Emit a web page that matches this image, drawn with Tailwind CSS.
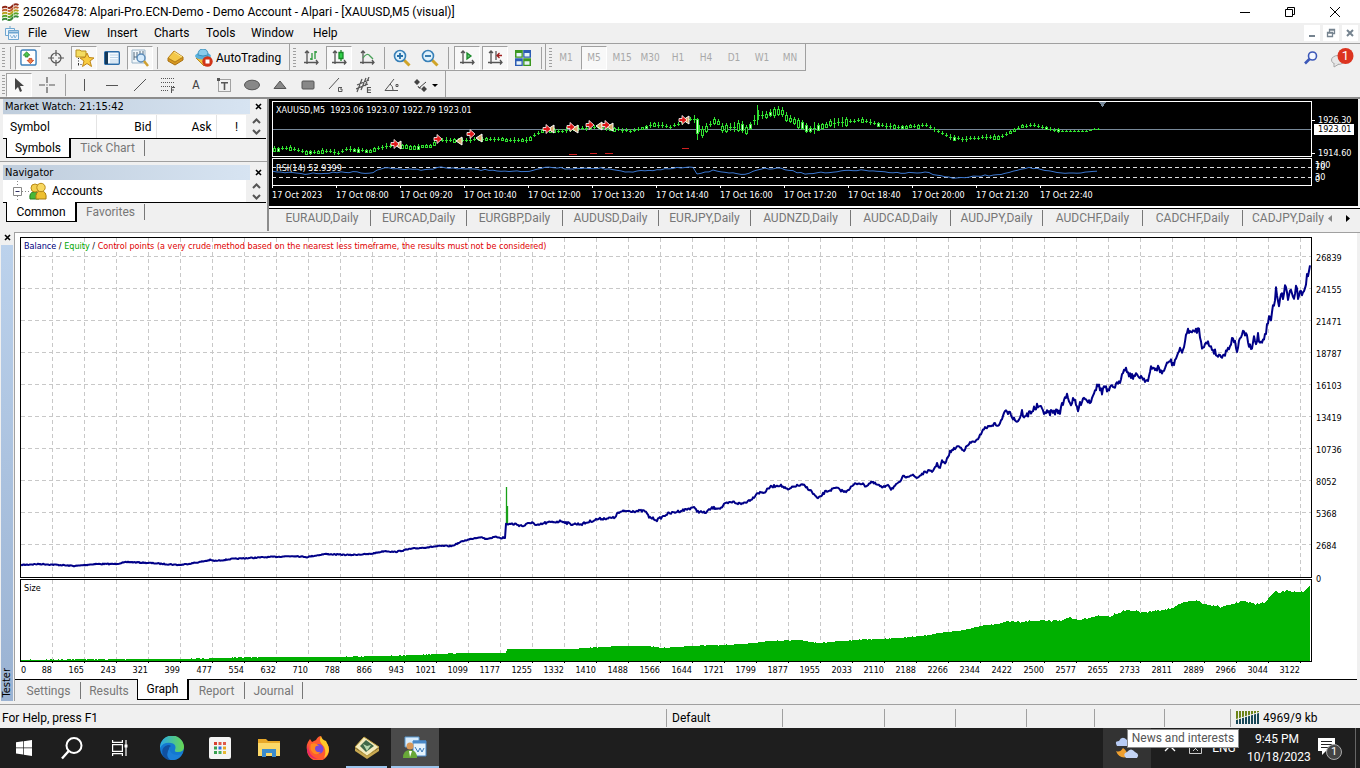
<!DOCTYPE html>
<html lang="en">
<head>
<meta charset="utf-8">
<title>Alpari MetaTrader</title>
<script src="https://cdn.jsdelivr.net/npm/@tailwindcss/browser@4"></script>
</head>
<body class="flex h-screen flex-col overflow-hidden bg-[#f0f0f0] font-[Roboto,sans-serif] text-xs leading-4 text-black">

<header class="flex h-[23px] shrink-0 items-center bg-white">
  <svg class="ml-[2px] h-[18px] w-[17px]" viewBox="0 0 17 18" fill="none" stroke-width="2"><path d="M0 5q3-2 5.500-.5t5-1.500 6-1" stroke="#902818"/><path d="M0 8q3-2 5.500-.5t5-1.500 6-1" stroke="#c06030"/><path d="M0 11q3-2 5.500-.5t5-1.500 6-1" stroke="#b8a020"/><path d="M0 14q3-2 5.500-.5t5-1.500 6-1" stroke="#5aa428"/><path d="M0 17q3-2 5.500-.5t5-1.500 6-1" stroke="#388838"/><path d="M5.500 2v15M11.500 1v15" stroke="#fff" stroke-width=".5"/></svg>
  <h1 class="ml-1 flex-1 whitespace-nowrap">250268478: Alpari-Pro.ECN-Demo - Demo Account - Alpari - [XAUUSD,M5 (visual)]</h1>
  <div class="flex text-black">
    <button class="grid h-[22px] w-[45px] place-items-center" aria-label="Minimize"><svg class="size-3" viewBox="0 0 12 12" stroke="currentColor"><path d="M1 6.500h10"/></svg></button>
    <button class="grid h-[22px] w-[45px] place-items-center" aria-label="Restore"><svg class="size-3" viewBox="0 0 12 12" fill="none" stroke="currentColor"><path d="M1.500 3.500h7v7h-7zM3.500 3V1.500h7v7H9"/></svg></button>
    <button class="mr-[2px] grid h-[22px] w-[46px] place-items-center" aria-label="Close"><svg class="size-3" viewBox="0 0 12 12" stroke="currentColor"><path d="M1 1l10 10M11 1L1 11"/></svg></button>
  </div>
</header>

<nav class="flex h-[21px] shrink-0 items-center border-b border-[#a0a0a0]" aria-label="Menu">
  <svg class="mx-[5px] size-[14px]" viewBox="0 0 14 14" fill="#eef6fc" stroke="#6ea6d0"><path d="M.5 2.500h9v7h-9z"/><path d="M3.500 4.500h10v9h-10z"/><path d="M4 6.500h9" stroke-width="2"/><path d="M5 9l2 3 2-3 1 3 2-3" fill="none" stroke-width=".8"/><path d="M5 0v2"/></svg>
  <button class="w-9 text-left ml-1">File</button><button class="w-[43px] text-left">View</button><button class="w-[47px] text-left">Insert</button><button class="w-[52px] text-left">Charts</button><button class="w-[45px] text-left">Tools</button><button class="w-[62px] text-left">Window</button><button class="text-left">Help</button>
  <div class="ml-auto flex gap-[3px] pr-[2px] text-[#75838f]">
    <button class="grid size-4 place-items-center bg-white" aria-label="Minimize chart"><svg class="size-[10px]" viewBox="0 0 10 10" stroke="currentColor" stroke-width="2"><path d="M2 8h6"/></svg></button>
    <button class="grid size-4 place-items-center bg-white" aria-label="Restore chart"><svg class="size-[10px]" viewBox="0 0 10 10" fill="none" stroke="currentColor" stroke-width="1.300"><path d="M1.500 4.500h5v4h-5zM1 5h6M3.500 4V1.500h5v4H7M3 2h6"/></svg></button>
    <button class="grid size-4 place-items-center bg-white" aria-label="Close chart"><svg class="size-[10px]" viewBox="0 0 10 10" stroke="currentColor" stroke-width="2"><path d="M2 2l6 6M8 2L2 8"/></svg></button>
  </div>
</nav>

<div class="flex h-[27px] shrink-0 items-stretch" role="toolbar" aria-label="Standard">
  <div class="flex items-center border-r border-b border-[#a0a0a0] pl-[2px] pr-1 pt-px">
    <i class="h-5 w-[3px] bg-[repeating-linear-gradient(#a0a0a0_0_1px,transparent_1px_3px)]"></i>
    <i class="ml-[5px] mr-[3px] h-[22px] w-px bg-[#a0a0a0]"></i>
    <button class="mx-px grid h-6 w-[26px] place-items-center border border-white border-t-[#a0a0a0] border-l-[#a0a0a0] bg-[#f8f8f8]" aria-label="Market Watch"><svg class="size-[17px]" viewBox="0 0 18 18"><rect x="1" y="1" width="16" height="16" rx="2" fill="#fff" stroke="#3c80bc" stroke-width="1.500"/><path d="M7 3l3.500 3.500H8.500v2h-3v-2H3.500z" fill="#50c850" stroke="#208020" stroke-width=".8"/><path d="M11 15.500L7.500 12h2v-2h3v2h2z" fill="#f08048" stroke="#c03818" stroke-width=".8"/></svg></button>
    <button class="grid h-6 w-7 place-items-center" aria-label="Data Window"><svg class="size-4" viewBox="0 0 16 16" fill="none" stroke="#555" stroke-width="1.200"><circle cx="8" cy="8" r="5"/><path d="M8 0v6M8 10v6M0 8h6M10 8h6"/></svg></button>
    <button class="mx-px grid h-6 w-[26px] place-items-center border border-white border-t-[#a0a0a0] border-l-[#a0a0a0] bg-[#f8f8f8]" aria-label="Navigator"><svg class="size-[19px]" viewBox="0 0 19 19"><path d="M1 2h4l1 1h5v6H1z" fill="#f4dc60" stroke="#b89020"/><path d="M3.500 10v8M3 16.500h6" stroke="#333" stroke-dasharray="1 1.500"/><path d="M12 5l2 4.500 5 .5-4 3 1.500 5.500-4.500-3-4.500 3L9 13l-4-3 5-.5z" fill="#f8cc40" stroke="#c08818"/></svg></button>
    <button class="grid h-6 w-7 place-items-center" aria-label="Terminal"><svg class="h-[14px] w-4" viewBox="0 0 16 14"><rect x=".7" y=".7" width="14.600" height="12.600" rx="1" fill="#f4faff" stroke="#2c6ca8" stroke-width="1.400"/><path d="M2.500 1v12" stroke="#143858" stroke-width="3"/><path d="M6 4h8M6 6.500h8M6 9h8M6 11h8" stroke="#bcd4e8"/></svg></button>
    <button class="mx-px grid h-6 w-[26px] place-items-center border border-white border-t-[#a0a0a0] border-l-[#a0a0a0] bg-[#f8f8f8]" aria-label="Strategy Tester"><svg class="size-[18px]" viewBox="0 0 18 18" fill="none"><path d="M1 1h13v13H1z" fill="#f0f6fa" stroke="#9ab4c8"/><path d="M3 3v8M3 8h3M6 3v6M9 2v4M12 2v4" stroke="#50687c"/><circle cx="10" cy="9" r="4" fill="#d4eafc" stroke="#5c8cb8" stroke-width="1.500"/><path d="M13 12l4 5" stroke="#d0a030" stroke-width="2.500"/></svg></button>
    <i class="mx-[3px] h-[22px] w-px bg-[#a0a0a0]"></i>
    <button class="grid h-6 w-7 place-items-center" aria-label="New Order"><svg class="h-4 w-[17px]" viewBox="0 0 17 16"><path d="M1 8l7 4 8-5v3l-8 5-7-4z" fill="#d89820" stroke="#a87010"/><path d="M1 8l6-7 9 6-8 5z" fill="#f4c848" stroke="#b88018"/><path d="M7 2l8 5" stroke="#fce898"/></svg></button>
    <button class="flex h-6 w-24 items-center gap-[3px] pl-[6px]"><svg class="size-[18px] shrink-0" viewBox="0 0 18 18"><path d="M1 9l8 8 6-6V8z" fill="#f0c040" stroke="#b88820"/><ellipse cx="8" cy="7" rx="8" ry="3.500" fill="#58b0dc"/><path d="M3 6q0-6 5-6t5 6q-5 2-10 0" fill="#88ccec" stroke="#3c90bc"/><circle cx="12.500" cy="12.500" r="5.200" fill="#d03418"/><rect x="10.500" y="10.500" width="4" height="4" fill="#fff"/></svg><span>AutoTrading</span></button>
  </div>
  <div class="flex items-center border-r border-b border-[#a0a0a0] pl-[3px] pr-[3px] pt-px">
    <i class="mr-px h-5 w-[3px] bg-[repeating-linear-gradient(#a0a0a0_0_1px,transparent_1px_3px)]"></i>
    <button class="grid h-6 w-7 place-items-center" aria-label="Bar chart"><svg class="size-[15px]" viewBox="0 0 15 15" fill="none" stroke="#555" stroke-width="1.300"><path d="M3 1v13M1 3l2-2 2 2M0 12.500h14M12 10l2 2.500-2 2"/><path d="M8 3v7M6 9h2M11 1v8M11 2h2" stroke="#289838"/></svg></button>
    <button class="mx-px grid h-6 w-[26px] place-items-center border border-white border-t-[#a0a0a0] border-l-[#a0a0a0] bg-[#f8f8f8]" aria-label="Candlesticks"><svg class="size-[15px]" viewBox="0 0 15 15" fill="none" stroke="#555" stroke-width="1.300"><path d="M3 1v13M1 3l2-2 2 2M0 12.500h14M12 10l2 2.500-2 2"/><path d="M9 0v11" stroke="#188828"/><path d="M7 2.500h4v6H7z" fill="#30d048" stroke="#188828"/></svg></button>
    <button class="grid h-6 w-7 place-items-center" aria-label="Line chart"><svg class="size-[15px]" viewBox="0 0 15 15" fill="none" stroke="#555" stroke-width="1.300"><path d="M3 1v13M1 3l2-2 2 2M0 12.500h14M12 10l2 2.500-2 2"/><path d="M3 8q4-6 7-2l3 3" stroke="#48a058"/></svg></button>
    <i class="mx-[3px] h-[22px] w-px bg-[#a0a0a0]"></i>
    <button class="grid h-6 w-7 place-items-center" aria-label="Zoom in"><svg class="size-[18px]" viewBox="0 0 18 18" fill="none"><path d="M11 11l5.500 5.500" stroke="#d0a428" stroke-width="3"/><circle cx="7" cy="7" r="5.500" fill="#e0f2fc" stroke="#3880b8" stroke-width="1.600"/><path d="M4 7h6M7 4v6" stroke="#2870a8" stroke-width="1.800"/></svg></button>
    <button class="grid h-6 w-7 place-items-center" aria-label="Zoom out"><svg class="size-[18px]" viewBox="0 0 18 18" fill="none"><path d="M11 11l5.500 5.500" stroke="#d0a428" stroke-width="3"/><circle cx="7" cy="7" r="5.500" fill="#e0f2fc" stroke="#3880b8" stroke-width="1.600"/><path d="M4 7h6" stroke="#2870a8" stroke-width="1.800"/></svg></button>
    <i class="mx-1 h-[22px] w-px bg-[#a0a0a0]"></i>
    <button class="mx-px grid h-6 w-[26px] place-items-center border border-white border-t-[#a0a0a0] border-l-[#a0a0a0] bg-[#f8f8f8]" aria-label="Auto scroll"><svg class="size-[15px]" viewBox="0 0 15 15" fill="none" stroke="#555" stroke-width="1.300"><path d="M3 1v13M1 3l2-2 2 2M0 12.500h14M12 10l2 2.500-2 2"/><path d="M7 3l4 3-4 3z" fill="#60c870" stroke="#188828"/></svg></button>
    <button class="mx-px grid h-6 w-[26px] place-items-center border border-white border-t-[#a0a0a0] border-l-[#a0a0a0] bg-[#f8f8f8]" aria-label="Chart shift"><svg class="size-[15px]" viewBox="0 0 15 15" fill="none" stroke="#555" stroke-width="1.300"><path d="M3 1v13M1 3l2-2 2 2M0 12.500h14M12 10l2 2.500-2 2M8 1v9"/><path d="M9 5.500h5M11.500 3L9 5.500 11.500 8" stroke="#a02020"/></svg></button>
    <button class="grid h-6 w-7 place-items-center" aria-label="Tile windows"><svg class="size-4" viewBox="0 0 16 16"><path d="M0 0h7.800v7.800H0zM8.200 8.200H16V16H8.200z" fill="#3c9820"/><path d="M8.200 0H16v7.800H8.200zM0 8.200h7.800V16H0z" fill="#2c5cb4"/><path d="M1.500 3h5v3.500h-5zM9.500 3h5v3.500h-5zM1.500 11.300h5v3.500h-5zM9.500 11.300h5v3.500h-5z" fill="#e8f4f8"/></svg></button>
    <i class="ml-1 h-[22px] w-px bg-[#a0a0a0]"></i>
  </div>
  <div class="flex items-center border-r border-b border-[#a0a0a0] pl-[3px] pr-px pt-px font-['DejaVu_Sans_Condensed','DejaVu_Sans',sans-serif] text-[10px] text-[#a8a8a8]">
    <i class="h-5 w-[3px] bg-[repeating-linear-gradient(#a0a0a0_0_1px,transparent_1px_3px)]"></i>
    <button class="h-6 w-7">M1</button><button class="mx-px h-6 w-[26px] border border-white border-t-[#a0a0a0] border-l-[#a0a0a0] bg-[#f8f8f8]">M5</button><button class="h-6 w-7">M15</button><button class="h-6 w-7">M30</button><button class="h-6 w-7">H1</button><button class="h-6 w-7">H4</button><button class="h-6 w-7">D1</button><button class="h-6 w-7">W1</button><button class="h-6 w-7">MN</button>
  </div>
  <div class="ml-auto flex items-center gap-3 pr-[6px]">
    <button aria-label="Search"><svg class="size-[14px]" viewBox="0 0 14 14" fill="none" stroke="#3c58b8"><circle cx="8.500" cy="5" r="4" fill="#f4f8ff" stroke-width="1.600"/><path d="M5.500 8L1 12.500" stroke-width="2.600"/></svg></button>
    <button class="relative h-6 w-6" aria-label="1 notification"><svg class="size-6" viewBox="0 0 24 24"><ellipse cx="8" cy="14" rx="6.500" ry="4.500" fill="#e8e8e8" stroke="#a8a8a8"/><path d="M4 17v4l5-3" fill="#e8e8e8" stroke="#a8a8a8"/><circle cx="15.500" cy="10" r="8" fill="#dc3420"/></svg><span class="absolute left-0 top-[2px] w-[31px] text-center text-[13px] text-white">1</span></button>
  </div>
</div>

<div class="flex h-7 shrink-0 border-b-2 border-[#8c8c8c]" role="toolbar" aria-label="Line studies">
  <div class="flex items-center border-r border-[#a0a0a0] pl-[2px] pr-[2px] pt-[2px]">
    <i class="h-5 w-[3px] bg-[repeating-linear-gradient(#a0a0a0_0_1px,transparent_1px_3px)]"></i>
    <button class="mx-px grid h-6 w-[26px] place-items-center border border-white border-t-[#a0a0a0] border-l-[#a0a0a0] bg-[#f8f8f8]" aria-label="Cursor"><svg class="h-[15px] w-[10px]" viewBox="0 0 10 15" fill="#444"><path d="M1 0v12l3-3 2 5 2-1-2-5h4z"/></svg></button>
    <button class="grid h-6 w-7 place-items-center" aria-label="Crosshair"><svg class="size-4" viewBox="0 0 16 16" stroke="#555" stroke-width="1.200"><path d="M8 0v6M8 10v6M0 8h6M10 8h6M8 7.500v1"/></svg></button>
    <i class="mx-1 h-[22px] w-px bg-[#a0a0a0]"></i>
    <button class="grid h-6 w-7 place-items-center" aria-label="Vertical line"><svg class="size-[14px]" viewBox="0 0 14 14" stroke="#555"><path d="M7.500 1v12"/></svg></button>
    <button class="grid h-6 w-7 place-items-center" aria-label="Horizontal line"><svg class="size-[14px]" viewBox="0 0 14 14" stroke="#555"><path d="M1 7.500h12"/></svg></button>
    <button class="grid h-6 w-7 place-items-center" aria-label="Trendline"><svg class="size-[14px]" viewBox="0 0 14 14" stroke="#555"><path d="M1 13L13 1"/></svg></button>
    <button class="grid h-6 w-7 place-items-center" aria-label="Fibonacci"><svg class="size-4" viewBox="0 0 16 16" fill="none" stroke="#555"><path d="M1 1.500h14M1 5.500h14M1 9.500h14M1 13.500h8" stroke-dasharray="1 1"/><path d="M11.500 16V10.500H15M11 13h3"/></svg></button>
    <button class="h-6 w-7 font-['DejaVu_Sans_Condensed',sans-serif] text-xs text-[#444]" aria-label="Text">A</button>
    <button class="grid h-6 w-7 place-items-center" aria-label="Text label"><svg class="size-[14px]" viewBox="0 0 14 14" fill="none" stroke="#555"><path d="M1.500 1.500h12v12h-12z" stroke-dasharray="1 1"/><path d="M0 0h3v3H0z" fill="#555" stroke="none"/><path d="M4 4.700h7M7.500 4v8" stroke-width="1.600"/></svg></button>
    <button class="grid h-6 w-7 place-items-center" aria-label="Ellipse"><svg class="h-3 w-4" viewBox="0 0 16 12" fill="#888" stroke="#555"><ellipse cx="8" cy="6" rx="7.500" ry="4.800"/></svg></button>
    <button class="grid h-6 w-7 place-items-center" aria-label="Triangle"><svg class="h-3 w-[14px]" viewBox="0 0 14 12" fill="#888" stroke="#555"><path d="M7 2l6 7.500H1z"/></svg></button>
    <button class="grid h-6 w-7 place-items-center" aria-label="Rectangle"><svg class="h-3 w-[14px]" viewBox="0 0 14 12" fill="#888" stroke="#555"><rect x="1" y="2" width="12" height="8" rx="1"/></svg></button>
    <button class="grid h-6 w-7 place-items-center" aria-label="Gann line"><svg class="size-4" viewBox="0 0 16 16" fill="none" stroke="#555"><path d="M1 12L11 1M14 10.500h-3.500v4H14V12h-2"/></svg></button>
    <button class="grid h-6 w-7 place-items-center" aria-label="Channel"><svg class="size-4" viewBox="0 0 16 16" fill="none" stroke="#555" stroke-width="1.200"><path d="M1 15L6 2M5 13l5-12M9 9l4-9M1 8l12-5M0 12l12-5M15 10.500h-3.500v5H15M12 13h3"/></svg></button>
    <button class="grid h-6 w-7 place-items-center" aria-label="Angle"><svg class="size-4" viewBox="0 0 16 16" fill="none" stroke="#555"><path d="M10 2L1 13.500h13M6 7q3 2 3 6M12 7.500h2v2h-2z"/></svg></button>
    <button class="flex h-6 w-[37px] items-center gap-1 pl-2" aria-label="Arrows"><svg class="size-[14px] shrink-0" viewBox="0 0 14 14" fill="#444"><path d="M3 1l3 3-3 3-3-3zM10 8l3 3-3 3-3-3z"/><path d="M5 10L12 4M4 8l1 2 2 0" stroke="#444" fill="none"/></svg><svg class="h-[3px] w-[6px] shrink-0" viewBox="0 0 6 3"><path d="M0 0h6L3 3z"/></svg></button>
  </div>
</div>

<main class="flex min-h-0 flex-1 flex-col">
  <div class="flex h-[132px] shrink-0">
    <aside class="flex w-[269px] shrink-0 flex-col border-r-2 border-[#8c8c8c]">
      <section class="h-[63px] border-b border-[#a0a0a0] pl-[3px] pr-px">
        <div class="flex h-[15px] items-center"><h2 class="flex-1 bg-linear-to-r from-[#bfcddc] to-[#d7e4f2] pl-[2px] font-['DejaVu_Sans_Condensed','DejaVu_Sans',sans-serif] text-[11px] leading-[15px]">Market Watch: 21:15:42</h2><button class="w-4" aria-label="Close"><svg class="mx-auto size-[7px]" viewBox="0 0 7 7" stroke="#000" stroke-width="1.600"><path d="M1 1l5 5M6 1L1 6"/></svg></button></div>
        <div class="mt-px flex h-6 border-b border-black bg-white">
          <table class="flex-1 table-fixed"><tr class="text-right"><th class="w-[93px] border-r border-[#e4e4e4] pl-[7px] text-left font-normal" scope="col">Symbol</th><th class="w-[60px] border-r border-[#e4e4e4] pr-1 font-normal" scope="col">Bid</th><th class="w-[60px] border-r border-[#e4e4e4] pr-1 font-normal" scope="col">Ask</th><th class="pr-2 font-normal" scope="col">!</th></tr></table>
          <div class="flex w-5 flex-col items-center justify-around bg-[#f0f0f0]"><svg class="h-[6px] w-[9px]" viewBox="0 0 9 6" fill="none" stroke="#555" stroke-width="2"><path d="M1 5L4.500 1.500 8 5"/></svg><svg class="h-[6px] w-[9px]" viewBox="0 0 9 6" fill="none" stroke="#555" stroke-width="2"><path d="M1 1L4.500 4.500 8 1"/></svg></div>
        </div>
        <div class="-mt-px flex h-5 pl-[3px] text-[#777]"><button class="w-[65px] border border-t-0 border-r-2 border-black bg-white text-black">Symbols</button><button class="my-[2px] w-[74px] border-r border-[#777]">Tick Chart</button></div>
      </section>
      <section class="h-[66px] pl-[3px] pr-px pt-[3px]">
        <div class="flex h-[15px] items-center"><h2 class="flex-1 bg-linear-to-r from-[#bfcddc] to-[#d7e4f2] pl-[2px] font-['DejaVu_Sans_Condensed','DejaVu_Sans',sans-serif] text-[11px] leading-[15px]">Navigator</h2><button class="w-4" aria-label="Close"><svg class="mx-auto size-[7px]" viewBox="0 0 7 7" stroke="#000" stroke-width="1.600"><path d="M1 1l5 5M6 1L1 6"/></svg></button></div>
        <div class="flex h-[23px] border-b border-black bg-white">
          <div class="flex flex-1 items-center pl-[10px]"><svg class="h-5 w-4" viewBox="0 0 16 20" fill="none" stroke="#888"><path d="M4.500 0v20M9 10.500h7" stroke-dasharray="1 2"/><path d="M.5 6.500h8v8h-8z" fill="#fff"/><path d="M2.500 10.500h4" stroke="#336"/></svg><svg class="size-[18px]" viewBox="0 0 18 18"><path d="M1 17q-1-7 4-7 6 0 5 7z" fill="#48b838" stroke="#288020"/><circle cx="6" cy="6" r="4" fill="#f4d050" stroke="#b88a18"/><path d="M7 17q-1-8 5-8 6 0 5 8z" fill="#eec030" stroke="#a87c10"/><circle cx="12" cy="5.500" r="4.200" fill="#f8d860" stroke="#b88a18"/></svg><span class="ml-[5px]">Accounts</span></div>
          <div class="flex w-5 flex-col items-center justify-around bg-[#f0f0f0]"><svg class="h-[6px] w-[9px]" viewBox="0 0 9 6" fill="none" stroke="#555" stroke-width="2"><path d="M1 5L4.500 1.500 8 5"/></svg><svg class="h-[6px] w-[9px]" viewBox="0 0 9 6" fill="none" stroke="#555" stroke-width="2"><path d="M1 1L4.500 4.500 8 1"/></svg></div>
        </div>
        <div class="-mt-px flex h-5 pl-[3px] text-[#777]"><button class="w-[71px] border border-t-0 border-r-2 border-black bg-white text-black">Common</button><button class="my-[2px] w-[68px] border-r border-[#777]">Favorites</button></div>
      </section>
    </aside>

    <section class="flex min-w-0 flex-1 flex-col" aria-label="XAUUSD chart">
      <div class="mr-[2px] flex h-[107px] bg-black pl-[3px] pt-[2px] font-['DejaVu_Sans_Condensed','DejaVu_Sans',sans-serif] text-[9px] text-white">
        <div class="min-w-0 flex-1">
          <div class="relative">
            <svg class="block h-[87px] w-full" viewBox="272 101 1040 87" preserveAspectRatio="none" shape-rendering="crispEdges">
              <path d="M272 129.500H1312" stroke="#778899"/>
              <path d="M272 167.500H1312M272 177.500H1312" stroke="#ddd" stroke-dasharray="4 3"/>
              <polyline id="rsi" fill="none" stroke="#3c78d0" shape-rendering="auto"/>
              <g id="candles" stroke="#30e030"></g>
              <g id="deals" shape-rendering="auto"></g>
              <path d="M569 154.500h8M590 153.500h7M605 153.500h8M682 148.500h7" stroke="#d02020"/>
              <path d="M1098 101h9l-4.500 6z" fill="#778899"/>
              <path d="M272.500 101.500h1039v55h-1039zM272.500 158.500h1039v27h-1039z" fill="none" stroke="#fff"/>
              <path d="M272.500 185v3M336.500 185v3M400.500 185v3M464.500 185v3M528.500 185v3M592.500 185v3M656.500 185v3M720.500 185v3M784.500 185v3M848.500 185v3M912.500 185v3M976.500 185v3M1040.500 185v3" stroke="#fff"/>
            </svg>
            <p class="absolute left-1 top-px whitespace-pre">XAUUSD,M5  1923.06 1923.07 1922.79 1923.01</p>
            <p class="absolute left-1 top-[59px]">RSI(14) 52.9399</p>
          </div>
          <div class="grid grid-cols-[repeat(16,4fr)_1fr] whitespace-nowrap leading-[14px]"><span>17 Oct 2023</span><span>17 Oct 08:00</span><span>17 Oct 09:20</span><span>17 Oct 10:40</span><span>17 Oct 12:00</span><span>17 Oct 13:20</span><span>17 Oct 14:40</span><span>17 Oct 16:00</span><span>17 Oct 17:20</span><span>17 Oct 18:40</span><span>17 Oct 20:00</span><span>17 Oct 21:20</span><span>17 Oct 22:40</span></div>
        </div>
        <div class="relative w-[46px] leading-[11px]">
          <i class="absolute left-0 top-[19px] h-px w-[3px] bg-white"></i><i class="absolute left-0 top-[52px] h-px w-[3px] bg-white"></i>
          <span class="absolute left-[6px] top-[14px]">1926.30</span>
          <span class="absolute left-[6px] top-[47px]">1914.60</span>
          <span class="absolute left-[2px] top-[23px] bg-white pr-[3px] pl-[4px] text-black">1923.01</span>
          <span class="absolute left-[3px] top-[59px]">100</span><span class="absolute left-[3px] top-[61px]">70</span>
          <span class="absolute left-[3px] top-[71px]">30</span><span class="absolute left-[3px] top-[73px]">0</span>
        </div>
      </div>
      <div class="h-[3px] border-t border-b border-t-white border-b-black bg-white"></div>
      <div class="flex h-[18px] items-center text-[#777]">
        <div class="flex min-w-0 flex-1 whitespace-nowrap pl-[5px] leading-4">
          <button class="w-[97px] shrink-0 border-r border-[#777]">EURAUD,Daily</button><button class="w-24 shrink-0 border-r border-[#777]">EURCAD,Daily</button><button class="w-24 shrink-0 border-r border-[#777]">EURGBP,Daily</button><button class="w-24 shrink-0 border-r border-[#777]">AUDUSD,Daily</button><button class="w-[92px] shrink-0 border-r border-[#777]">EURJPY,Daily</button><button class="w-[100px] shrink-0 border-r border-[#777]">AUDNZD,Daily</button><button class="w-[100px] shrink-0 border-r border-[#777]">AUDCAD,Daily</button><button class="w-[92px] shrink-0 border-r border-[#777]">AUDJPY,Daily</button><button class="w-[100px] shrink-0 border-r border-[#777]">AUDCHF,Daily</button><button class="w-[100px] shrink-0 border-r border-[#777]">CADCHF,Daily</button><button class="w-[84px] shrink-0 pl-[6px]">CADJPY,Daily</button>
        </div>
        <button class="w-3" aria-label="Scroll left"><svg class="h-[7px] w-1" viewBox="0 0 4 7" fill="#888"><path d="M4 0v7L0 3.500z"/></svg></button>
        <button class="mr-1 w-4" aria-label="Scroll right"><svg class="mx-auto h-[7px] w-1" viewBox="0 0 4 7"><path d="M0 0v7l4-3.500z"/></svg></button>
      </div>
    </section>
  </div>

  <section class="mt-px flex min-h-0 flex-1 border-b border-[#a0a0a0] pb-[3px]" aria-label="Tester">
    <div class="flex w-[15px] flex-col border-r border-[#a0a0a0]">
      <button class="grid h-[11px] place-items-center" aria-label="Close tester"><svg class="size-[7px]" viewBox="0 0 7 7" stroke="#000" stroke-width="1.600"><path d="M1 1l5 5M6 1L1 6"/></svg></button>
      <div class="mt-[2px] mr-px ml-px flex flex-1 items-center bg-linear-to-b from-[#bcd2ec] to-[#9ab2d2] pb-1 font-['DejaVu_Sans_Condensed','DejaVu_Sans',sans-serif] text-[11px] leading-3"><h2 class="mt-auto rotate-180 [writing-mode:vertical-rl]">Tester</h2></div>
    </div>
    <div class="flex min-w-0 flex-1 flex-col border-t border-[#a0a0a0]">
      <div class="mr-[3px] flex min-h-0 flex-1 bg-white pb-[2px] pl-[5px] pt-1 font-['DejaVu_Sans_Condensed','DejaVu_Sans',sans-serif] text-[9px]">
        <div class="flex min-w-0 flex-1 flex-col">
          <div class="relative min-h-0 flex-1">
            <svg class="absolute inset-0 size-full" viewBox="20 237 1292 341" preserveAspectRatio="none">
              <g id="grid" stroke="#c8c8c8" stroke-dasharray="4 3" shape-rendering="crispEdges"></g>
              <path d="M506.500 525V487M507.500 525V506" stroke="#18a018" stroke-width="1.300"/>
              <polyline id="balance" fill="none" stroke="#000088" stroke-width="2" stroke-linejoin="round"/>
              <path d="M20.500 237.500h1291v340h-1291z" fill="none" stroke="#000" shape-rendering="crispEdges"/>
            </svg>
            <p class="absolute left-1 top-px text-black"><span class="text-[#000080]">Balance</span> / <span class="text-[#00a800]">Equity</span> / <span class="text-[#e00000]">Control points (a very crude method based on the nearest less timeframe, the results must not be considered)</span></p>
          </div>
          <div class="relative mt-px">
            <svg class="block h-[84px] w-full" viewBox="20 579 1292 84" preserveAspectRatio="none" shape-rendering="crispEdges">
              <g id="gridSize" stroke="#c8c8c8" stroke-dasharray="4 3"></g>
              <polygon id="size" fill="#00b000"/>
              <path d="M20.500 579.500h1291v82h-1291z" fill="none" stroke="#000"/>
              <g id="ticks" stroke="#000"></g>
            </svg>
            <p class="absolute left-1 top-px">Size</p>
          </div>
          <div class="grid grid-cols-[repeat(40,8fr)_3fr] text-right leading-[14px]"><span class="flex justify-between pl-px"><span>0</span><span>88</span></span><span>165</span><span>243</span><span>321</span><span>399</span><span>477</span><span>554</span><span>632</span><span>710</span><span>788</span><span>866</span><span>943</span><span>1021</span><span>1099</span><span>1177</span><span>1255</span><span>1332</span><span>1410</span><span>1488</span><span>1566</span><span>1644</span><span>1721</span><span>1799</span><span>1877</span><span>1955</span><span>2033</span><span>2110</span><span>2188</span><span>2266</span><span>2344</span><span>2422</span><span>2500</span><span>2577</span><span>2655</span><span>2733</span><span>2811</span><span>2889</span><span>2966</span><span>3044</span><span>3122</span></div>
        </div>
        <div class="mb-[98px] grid w-[45px] grid-rows-[4fr_repeat(10,32fr)_17fr] items-center pl-1 pt-px"><i></i><span>26839</span><span>24155</span><span>21471</span><span>18787</span><span>16103</span><span>13419</span><span>10736</span><span>8052</span><span>5368</span><span>2684</span><span class="-mb-2 self-end">0</span></div>
      </div>
      <div class="mr-[3px] flex h-[22px] border-t border-black bg-[#f0f0f0] text-[#777]">
        <button class="my-[2px] w-[66px] border-r border-[#777] pl-[2px]">Settings</button><button class="my-[2px] w-[56px]">Results</button><button class="-mt-px h-[21px] w-[52px] border border-t-0 border-r-2 border-black bg-white text-black">Graph</button><button class="my-[2px] w-[56px] border-r border-[#777]">Report</button><button class="my-[2px] w-[58px] border-r border-[#777]">Journal</button>
      </div>
    </div>
  </section>
</main>

<div class="flex h-[23px] shrink-0 items-center pt-[2px]" role="status">
  <span class="flex-1 pl-[2px]">For Help, press F1</span>
  <span class="h-[18px] w-[116px] border-l border-[#a0a0a0] pl-[5px] leading-[18px]">Default</span><span class="h-[18px] w-[102px] border-l border-[#a0a0a0]"></span><span class="h-[18px] w-[71px] border-l border-[#a0a0a0]"></span><span class="h-[18px] w-[71px] border-l border-[#a0a0a0]"></span><span class="h-[18px] w-[68px] border-l border-[#a0a0a0]"></span><span class="h-[18px] w-[70px] border-l border-[#a0a0a0]"></span><span class="h-[18px] w-[66px] border-l border-[#a0a0a0]"></span>
  <span class="flex h-[18px] w-[130px] items-center gap-1 border-l border-[#a0a0a0] pl-[5px]"><svg class="h-[13px] w-[23px]" viewBox="0 0 23 13"><path d="M1 0v13M4 0v13M7 0v13M10 0v13M13 0v13M16 0v13M19 0v13M22 0v13" stroke="#6c8418" stroke-width="2"/><path d="M1 9v4M4 8v5M7 7v6M10 6v7M13 5v8M16 4v9M19 3v10M22 2v11" stroke="#184858" stroke-width="2"/><path d="M0 8.500L23 1.500" stroke="#f0f0f0"/></svg>4969/9 kb</span>
</div>

<footer class="flex h-10 shrink-0 bg-[#1e1e1e] text-white">
  <button class="grid w-12 place-items-center" aria-label="Start"><svg class="size-4" viewBox="0 0 16 16" fill="#fff"><path d="M0 2.300l7-1v6.300H0zM7.700 1.200L16 0v7.600H7.700zM0 8.300h7v6.300l-7-1zM7.700 8.300H16V16l-8.300-1.200z"/></svg></button>
  <button class="grid w-12 place-items-center" aria-label="Search"><svg class="size-6" viewBox="0 0 24 24" fill="none" stroke="#fff" stroke-width="2"><circle cx="14" cy="9.500" r="7.500"/><path d="M8.700 15L2 22.500" stroke-width="2.400"/></svg></button>
  <button class="grid w-12 place-items-center" aria-label="Task view"><svg class="size-4" viewBox="0 0 16 16" fill="none" stroke="#fff" stroke-width="1.200"><path d="M.6 4.600h9.800v6.800H.6zM.6 0v2.400h9.800V0M.6 16v-2.400h9.800V16M14 0v16"/><path d="M12.500 4.500h3v3h-3z" fill="#fff" stroke="none"/></svg></button>
  <button class="ml-[3px] grid w-[49px] place-items-center" aria-label="Edge"><svg class="size-6" viewBox="0 0 24 24"><defs><linearGradient id="eg" x1="0" x2="1"><stop offset="0" stop-color="#28a8e8"/><stop offset="1" stop-color="#68d850"/></linearGradient></defs><circle cx="12" cy="12" r="12" fill="#1478d0"/><path d="M0 12A12 12 0 0 1 24 11q0 5-6 5-4 0-3-2 2-6-4-7Q3 6 0 12" fill="url(#eg)"/><path d="M9 12q-1 9 9 10-10 5-15-2-3-9 5-11 2 0 3 1-2 1-2 2" fill="#1050a0"/><path d="M9.500 12q0 6 7 7 4 0 6-2-3 8-12 7-6-4-1-12" fill="#1c80d8"/></svg></button>
  <button class="grid w-12 place-items-center" aria-label="Apps"><svg class="size-[22px]" viewBox="0 0 22 22"><rect width="22" height="22" rx="2" fill="#f4f4f4"/><path d="M5 5h3v3H5z" fill="#d84030"/><path d="M9.500 5h3v3h-3zM14 5h3v3h-3z" fill="#e05848"/><path d="M5 9.500h3v3H5z" fill="#38a050"/><path d="M9.500 9.500h3v3h-3z" fill="#3070e0"/><path d="M14 9.500h3v3h-3z" fill="#e8a820"/><path d="M5 14h3v3H5z" fill="#38a050"/><path d="M9.500 14h3v3h-3z" fill="#48b060"/><path d="M14 14h3v3h-3z" fill="#e8b830"/></svg></button>
  <button class="grid w-[49px] place-items-center" aria-label="File Explorer"><svg class="h-5 w-[22px]" viewBox="0 0 22 20"><path d="M0 1h8l2 2h12v6H0z" fill="#e8a828"/><path d="M0 5h22v13H0z" fill="#fcd868"/><path d="M4 11h14v8h-4v-4H8v4H4z" fill="#3c8ccc"/></svg></button>
  <button class="grid w-[49px] place-items-center" aria-label="Firefox"><svg class="size-6" viewBox="0 0 24 24"><path d="M2 6l2-3 2 3 4-2q2-4 5-4l1 4q7 3 7 10a11 11 0 0 1-22 0q-1-4 1-8" fill="#ff5a30"/><path d="M15 0q1 4 5 5 3 5 3 9a11 11 0 0 1-5 8q4-8-3-15-2-3 0-7" fill="#ffc828"/><path d="M2 8q0 12 10 15-9 0-11-8" fill="#e82868"/><circle cx="12.500" cy="13" r="5" fill="#7848d8"/><path d="M5 8q5-2 8 2-4-1-4 3 1 4 6 3-4 4-8 1-4-4-2-9" fill="#ff8820"/></svg></button>
  <button class="mx-1 grid w-[41px] place-items-center border-b-2 border-[#9cc4ec]" aria-label="MetaEditor"><svg class="size-6" viewBox="0 0 24 24"><path d="M0 13l12 8 12-8v3l-12 8L0 16z" fill="#c8a850"/><path d="M0 12L9 2l15 10-12 9z" fill="#f4ecc0" stroke="#c0a040"/><path d="M5 11l6-6 8 6-8 6z" fill="#406848"/><path d="M8 9l4 2 4-1-4 6z" fill="#b8d8b0"/></svg></button>
  <button class="grid w-12 place-items-center border-b-2 border-[#9cc4ec] bg-[#4a4a4a]" aria-label="MetaTrader"><svg class="h-[22px] w-6" viewBox="0 0 24 22"><path d="M2 1h14v10H2z" fill="#d8ecfc" stroke="#5898d0"/><path d="M10 5h13v15H10z" fill="#e4f2fc" stroke="#4888c8"/><path d="M10 6h13" stroke="#4888c8" stroke-width="3"/><path d="M12 11l3 5 2-4 2 4 2-4" fill="none" stroke="#3878b8"/><circle cx="7" cy="10" r="3.500" fill="#d89858"/><path d="M0 22q0-8 7-8t7 8z" fill="#68a838"/><path d="M6 15l1 6 2-6z" fill="#fff"/></svg></button>
  <div class="relative ml-auto flex">
    <button class="grid w-12 place-items-center bg-[#333]" aria-label="News and interests"><svg class="size-6" viewBox="0 0 24 24"><path d="M2 10q-3-5 2-5 3-6 8-1 5 1 3 6z" fill="#b8ccf4"/><path d="M1 15q4 2 7-3 5 3 4 9-8 2-11-6" fill="#f0a030"/><path d="M11 22q-4-4 1-6 4-5 8 0 5 2 2 6z" fill="#c4d4f4"/></svg></button>
    <button class="grid w-[38px] place-items-center" aria-label="Show hidden icons"><svg class="h-[7px] w-3" viewBox="0 0 12 7" fill="none" stroke="#fff" stroke-width="1.300"><path d="M1 6l5-5 5 5"/></svg></button>
    <button class="w-3 grid place-items-center" aria-label="Touch keyboard"><svg class="h-[11px] w-[13px]" viewBox="0 0 13 11" fill="none" stroke="#ccc"><path d="M.5.500h12v10H.5zM4 3l5 5M9 3L4 8"/></svg></button>
    <button class="w-[46px]">ENG</button>
    <button class="w-[60px] whitespace-nowrap leading-[18px]">9:45 PM<br>10/18/2023</button>
    <button class="relative grid w-[46px] place-items-center" aria-label="Notifications"><svg class="h-6 w-[26px]" viewBox="0 0 26 24"><path d="M1 2h17v13H9l-4 4v-4H1z" fill="#fff"/><path d="M4 5.500h11M4 8.500h11M4 11.500h8" stroke="#222"/><circle cx="17" cy="16" r="7.500" fill="#444" stroke="#aaa"/></svg><span class="absolute left-[21px] top-[16px] w-3 text-center text-[11px]">1</span></button>
    <i class="mr-1 ml-[2px] w-px bg-[#666]"></i>
    <div class="absolute left-[24px] top-px w-28 whitespace-nowrap border border-[#888] bg-white text-center leading-[17px] text-[#555]" role="tooltip">News and interests</div>
  </div>
</footer>

<script>
const $ = id => document.getElementById(id);
const pairs = s => s.trim().split(/\s+/).map(p => p.split(',').map(Number));
let seed = 7;
const rnd = () => (seed = (seed * 16807) % 2147483647) / 2147483647;
function at(pts, x) {
  let i = 1;
  while (i < pts.length - 1 && pts[i][0] < x) i++;
  const [x0, y0] = pts[i - 1], [x1, y1] = pts[i];
  return y0 + (y1 - y0) * (x - x0) / (x1 - x0 || 1);
}
function sample(pts, from, to, step, amp) {
  const out = [];
  for (let x = from; x <= to; x += step) out.push(x + ',' + (at(pts, x) + (rnd() - .5) * amp(x)).toFixed(1));
  return out.join(' ');
}

// Balance curve of the test run
const bal = pairs(`20,565 40,564 60,565 75,566 95,564 115,564 128,562 150,563 180,565 200,562 210,560 215,561 232,559 250,558 270,557 295,556 307,557 325,554 350,555 370,554 385,551 395,552 410,549 440,546 452,546 463,541 475,538 481,537 486,539 495,537 505,538 506,524 515,524 523,526 532,522 536,526 545,523 562,521 570,524 582,524 598,519 610,518 614,518 618,513 625,511 638,511 645,511 649,517 657,520 667,514 680,511 688,509 693,507 697,511 705,513 712,508 721,508 725,504 733,502 741,504 748,501 753,498 757,493 765,492 770,487 780,485 788,490 795,486 803,485 810,490 818,499 825,492 836,488 845,492 855,484 860,483 866,486 871,482 878,485 883,488 888,484 891,489 899,483 903,477 912,475 917,478 922,474 928,471 932,472 937,464 940,468 942,461 945,464 950,452 958,446 964,450 970,443 978,440 983,429 995,424 999,426 1003,415 1010,410 1013,418 1018,421 1022,412 1025,418 1030,412 1038,406 1042,410 1047,413 1060,411 1063,403 1067,393 1070,404 1074,400 1078,410 1083,397 1090,402 1095,389 1099,385 1102,393 1104,386 1108,392 1112,387 1119,384 1124,367 1131,376 1140,376 1148,381 1151,369 1158,368 1162,373 1170,360 1173,365 1179,351 1183,350 1188,329 1192,334 1195,330 1199,330 1202,346 1208,343 1218,356 1225,354 1230,345 1233,337 1237,350 1242,334 1246,333 1249,346 1252,350 1254,337 1256,344 1258,335 1260,343 1265,336 1269,317 1271,320 1273,304 1274,308 1276,288 1279,305 1281,292 1283,299 1285,284 1288,298 1291,289 1294,300 1296,283 1298,297 1300,289 1302,297 1304,292 1307,277 1310,268`);
$('balance').setAttribute('points', sample(bal, 21, 1310, 1, x => x > 1000 ? 6 : x > 500 ? 2.4 : 1));

// Lot size histogram
const size = pairs(`20,660 120,659 180,659 220,658 270,657 330,657 380,656 420,655 460,653 506,653 507,649 570,649 618,646 650,646 662,648 690,646 725,645 745,644 770,641 800,640 818,643 855,640 900,638 930,635 945,632 965,630 985,625 1000,624 1007,621 1020,622 1040,620 1060,621 1067,617 1078,620 1095,616 1110,616 1126,610 1145,612 1170,609 1187,601 1199,601 1203,604 1220,607 1245,601 1253,604 1265,603 1269,598 1276,591 1281,593 1286,590 1290,592 1303,592 1310,585`);
$('size').setAttribute('points', '21,661 ' + sample(size, 21, 1310, 1, x => x > 1000 ? 2.4 : 1) + ' 1310,661');

// Grid and axis ticks
let g = '', gs = '', t = '';
for (let k = 1; k <= 40; k++) {
  const x = 20.5 + 32 * k;
  g += `<path d="M${x} 238V577"/>`;
  gs += `<path d="M${x} 580V661"/>`;
  t += `<path d="M${x} 661v2"/>`;
}
for (let k = 0; k < 10; k++) g += `<path d="M21 ${256.5 + 32 * k}H1311"/>`;
$('grid').innerHTML = g; $('gridSize').innerHTML = gs; $('ticks').innerHTML = t;

// Five-minute candles
const price = pairs(`273,149 289,148 306,152 330,151 338,153 345,149 370,151 380,147 395,145 410,147 430,146 437,140 460,140 480,139 528,140 533,136 545,129 560,131 580,128 600,127 630,131 655,124 670,127 690,119 696,119 697,127 702,132 710,124 716,119 722,128 740,126 747,131 757,115 765,115 780,110 787,118 797,122 808,129 820,127 830,123 845,122 862,120 880,125 900,127 925,125 935,129 950,137 962,139 985,137 1000,137 1013,130 1022,126 1032,125 1050,129 1062,131 1085,131 1093,129 1099,129`);
let c = '';
for (let x = 274; x < 1099; x += 4) {
  const y = Math.round(at(price, x)), wild = x > 690 && x < 850, calm = x > 1060;
  const h = calm ? 1 : wild ? 3 + Math.round(rnd() * 4) : 2 + Math.round(rnd());
  const w = calm ? 1 : wild ? 3 + rnd() * 3 : 1 + rnd() * 2;
  c += `<path d="M${x + .5} ${(y - h / 2 - w / 2).toFixed(1)}v${(h + w).toFixed(1)}"/>`;
  if (!calm && rnd() > (wild ? .3 : .7)) c += `<path d="M${x - .5} ${y - Math.floor(h / 2) + .5}h2v${h}h-2z" fill="${rnd() > .6 ? '#e0ffe0' : '#000'}"/>`;
  else c += `<path d="M${x - 1} ${y + .5}h3"/>`;
}
c += '<path d="M757.5 105v20M697.5 118v22"/><rect x="696.500" y="119.500" width="2" height="14" fill="#e0ffe0"/>';
$('candles').innerHTML = c;

$('rsi').setAttribute('points', sample(pairs(`273,171 300,174 320,173 345,172 370,173 385,168 430,170 437,167 455,168 500,171 530,172 545,167 570,169 600,168 630,172 655,170 685,167 693,167 698,175 713,170 725,173 745,174 760,169 780,168 805,174 830,172 862,170 890,173 925,172 940,176 957,178 975,176 1000,175 1015,170 1030,168 1050,171 1065,173 1080,173 1097,171`), 273, 1097, 4, () => 1.5));

// Entry (red) and exit (tan) marks
const red = pairs('395,144 438,139 471,134 547,129 571,127 590,125 606,125 683,120');
const tan = pairs('398,145 459,141 479,138 551,129 575,129 599,126 610,127 686,120');
$('deals').innerHTML =
  tan.map(([x, y]) => `<path d="M${x + 3} ${y - 4}v8l-6-4z" fill="#d8a868" stroke="#fff"/>`).join('') +
  red.map(([x, y]) => `<path d="M${x - 4} ${y - 1.5}h3v-3l5 4.500-5 4.500v-3h-3z" fill="#e01818" stroke="#fff" stroke-width=".8"/>`).join('');
</script>
</body>
</html>
